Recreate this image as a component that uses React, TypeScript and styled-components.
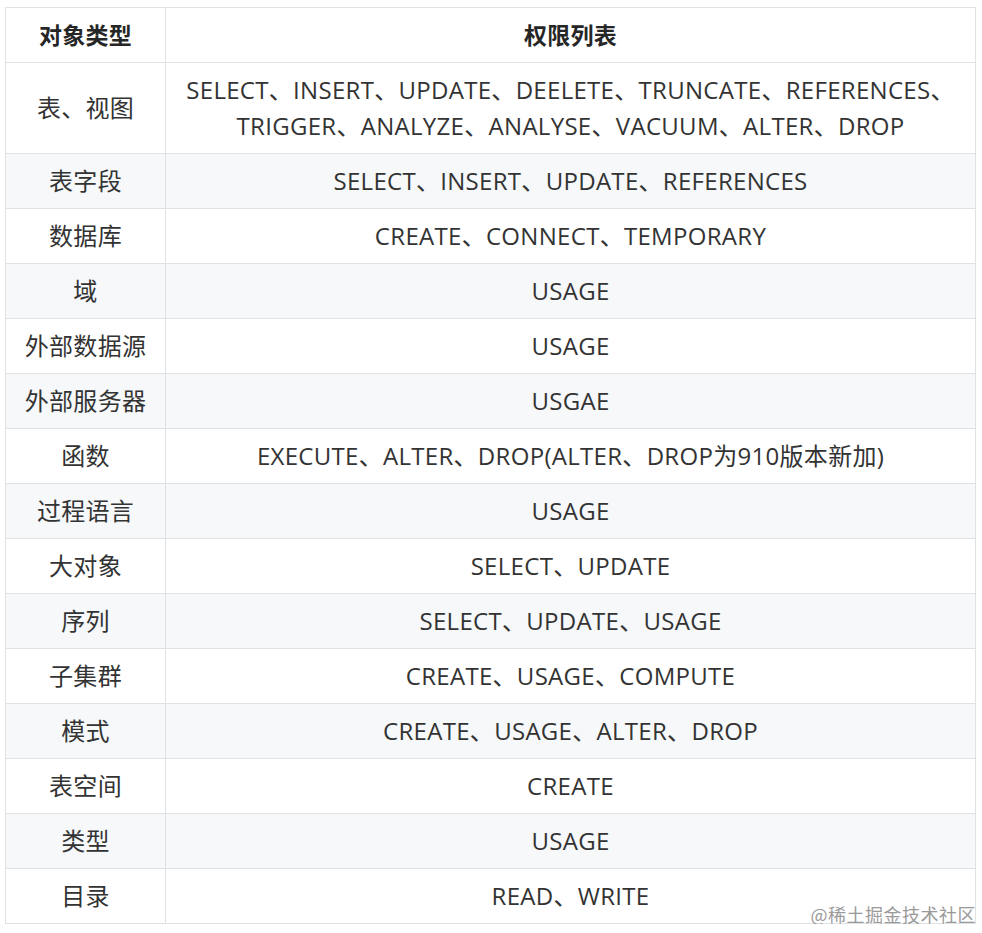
import React from "react";
import styled, { createGlobalStyle } from "styled-components";

const GlobalStyle = createGlobalStyle`
  html, body {
    margin: 0;
    padding: 0;
    background: #ffffff;
  }
`;

const Page = styled.div`
  position: relative;
  padding: 7px 0 0 5px;
  font-family: "Open Sans", "Noto Sans CJK SC", sans-serif;
  color: #333333;
`;

const Table = styled.table`
  border-collapse: collapse;
  width: 971px;
  table-layout: fixed;
  font-size: 24px;
  letter-spacing: 0.3px;
`;

const HeadCell = styled.th<{ $w?: number }>`
  width: ${(p) => (p.$w ? `${p.$w}px` : "auto")};
  border: 1px solid #dfe2e5;
  height: 55px;
  box-sizing: border-box;
  padding: 0 4px;
  font-weight: 700;
  font-size: 23px;
  color: #262626;
  text-align: center;
  line-height: 36px;
`;

const Row = styled.tr`
  &:nth-child(even) {
    background: #f6f8fa;
  }
`;

const Cell = styled.td`
  border: 1px solid #dfe2e5;
  height: 55px;
  box-sizing: border-box;
  padding: 9px 4px;
  text-align: center;
  line-height: 36px;
  color: #333333;
`;

const Watermark = styled.div`
  position: absolute;
  right: 6px;
  top: 903px;
  font-family: "Noto Sans CJK SC", sans-serif;
  font-size: 18px;
  line-height: 22px;
  color: #9a9a9a;
  letter-spacing: 0.5px;
`;

const rows: [string, string[]][] = [
  ["表、视图", ["SELECT、INSERT、UPDATE、DEELETE、TRUNCATE、REFERENCES、", "TRIGGER、ANALYZE、ANALYSE、VACUUM、ALTER、DROP"]],
  ["表字段", ["SELECT、INSERT、UPDATE、REFERENCES"]],
  ["数据库", ["CREATE、CONNECT、TEMPORARY"]],
  ["域", ["USAGE"]],
  ["外部数据源", ["USAGE"]],
  ["外部服务器", ["USGAE"]],
  ["函数", ["EXECUTE、ALTER、DROP(ALTER、DROP为910版本新加)"]],
  ["过程语言", ["USAGE"]],
  ["大对象", ["SELECT、UPDATE"]],
  ["序列", ["SELECT、UPDATE、USAGE"]],
  ["子集群", ["CREATE、USAGE、COMPUTE"]],
  ["模式", ["CREATE、USAGE、ALTER、DROP"]],
  ["表空间", ["CREATE"]],
  ["类型", ["USAGE"]],
  ["目录", ["READ、WRITE"]],
];

export default function App() {
  return (
    <>
      <GlobalStyle />
      <Page>
        <Table>
          <thead>
            <tr>
              <HeadCell $w={160}>对象类型</HeadCell>
              <HeadCell>权限列表</HeadCell>
            </tr>
          </thead>
          <tbody>
            {rows.map(([obj, privs]) => (
              <Row key={obj}>
                <Cell>{obj}</Cell>
                <Cell>
                  {privs.map((line, i) => (
                    <React.Fragment key={i}>
                      {i > 0 && <br />}
                      {line}
                    </React.Fragment>
                  ))}
                </Cell>
              </Row>
            ))}
          </tbody>
        </Table>
        <Watermark>@稀土掘金技术社区</Watermark>
      </Page>
    </>
  );
}
